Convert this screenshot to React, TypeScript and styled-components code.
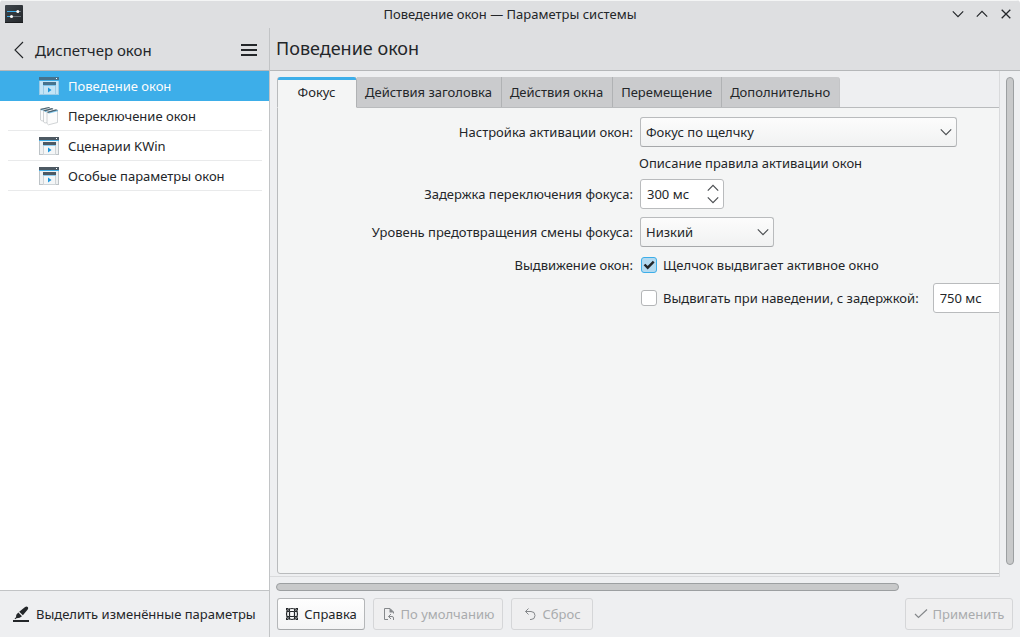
import React from "react";
import styled, { createGlobalStyle } from "styled-components";

const GlobalStyle = createGlobalStyle`
  *, *::before, *::after { box-sizing: border-box; }
  html, body { margin: 0; padding: 0; background: #fff; }
  body, button, input, select {
    font-family: "Noto Sans", sans-serif;
    font-size: 13px;
    line-height: 18px;
    color: #232629;
  }
`;

const Window = styled.div`
  display: flex;
  flex-direction: column;
  height: 100vh;
  overflow: hidden;
  background: #eeeff1;
  border-radius: 4px 4px 0 0;
`;

const TitleBar = styled.header`
  flex: none;
  display: grid;
  grid-template-columns: 1fr auto 1fr;
  align-items: center;
  height: 28px;
  padding: 0 2px 2px;
  background: #dedfe1;
  border-top: 1px solid #f4f5f5;

  > svg { margin-left: 3px; }
`;

const WindowButtons = styled.div`
  justify-self: end;
  display: flex;
`;

const IconButton = styled.button<{ $size: number }>`
  display: flex;
  align-items: center;
  justify-content: center;
  width: ${(p) => p.$size}px;
  height: ${(p) => p.$size}px;
  padding: 0;
  border: 0;
  background: none;
`;

const Body = styled.div`
  flex: 1;
  display: flex;
  min-height: 0;
`;

const Sidebar = styled.nav`
  flex: none;
  display: flex;
  flex-direction: column;
  width: 270px;
  background: #fff;
  border-right: 1px solid #c2c4c6;
`;

const PaneHeader = styled.div`
  flex: none;
  display: flex;
  align-items: center;
  height: 43px;
  padding: 0 8px 2px 6px;
  background: #dedfe1;
  border-bottom: 1px solid #b5b7b9;
`;

const SidebarHeader = styled(PaneHeader)`
  padding: 2px 8px 0 7px;
`;

const SidebarTitle = styled.h2`
  flex: 1;
  margin: 0 0 0 4px;
  font-size: 15px;
  line-height: 20px;
  font-weight: 400;
`;

const PageTitle = styled.h1`
  margin: 0;
  font-size: 18px;
  line-height: 24px;
  font-weight: 400;
`;

const NavList = styled.ul`
  flex: 1;
  margin: 0;
  padding: 0;
  list-style: none;
`;

const NavItem = styled.li<{ $active?: boolean }>`
  padding: 0 7px 0 8px;
  background: ${(p) => (p.$active ? "#3daee9" : "transparent")};
`;

const NavLink = styled.a<{ $active?: boolean }>`
  display: flex;
  align-items: center;
  gap: 8px;
  height: 30px;
  padding-left: 30px;
  color: ${(p) => (p.$active ? "#fcfcfc" : "#232629")};
  text-decoration: none;
  border-bottom: 1px solid ${(p) => (p.$active ? "transparent" : "#e9eaeb")};
`;

const HighlightButton = styled.button`
  flex: none;
  display: flex;
  align-items: center;
  gap: 6px;
  height: 47px;
  padding: 0 12px;
  border: 0;
  border-top: 1px solid #c2c4c6;
  background: #eeeff1;
  white-space: nowrap;
`;

const Main = styled.main`
  flex: 1;
  display: flex;
  flex-direction: column;
  min-width: 0;
`;

const ScrollArea = styled.div`
  flex: 1;
  display: grid;
  grid-template-columns: minmax(0, 1fr) 20px;
  grid-template-rows: minmax(0, 1fr) 20px;
  min-height: 0;
`;

const Viewport = styled.div`
  overflow: hidden;
  padding: 6px 0 2px 7px;
  border-right: 1px solid #d9dadc;
  border-bottom: 1px solid #d9dadc;
`;

const Page = styled.div`
  display: flex;
  flex-direction: column;
  width: 135%;
  height: 100%;
`;

const Tabs = styled.div`
  flex: none;
  display: flex;
  height: 31px;
  margin-bottom: -1px;
`;

const Tab = styled.button<{ $active?: boolean }>`
  min-width: 80px;
  padding: 0 9px 0 8px;
  border: 0;
  background: #cacbcd;
  border-right: 1px solid #b0b2b4;
  border-bottom: 1px solid #b9bbbd;
  white-space: nowrap;

  &:last-child {
    border-right-color: #c4c5c7;
    border-top-right-radius: 3px;
  }

  ${(p) =>
    p.$active &&
    `
    position: relative;
    background: linear-gradient(#3daee9 3px, #f4f5f5 3px);
    border-left: 1px solid #b9bbbd;
    border-bottom-color: #f4f5f5;
    border-radius: 3px 3px 0 0;
  `}
`;

const TabPane = styled.div`
  flex: 1;
  padding: 9px 8px;
  background: #f4f5f5;
  border: 1px solid #b9bbbd;
  border-radius: 0 0 3px 3px;
`;

const Form = styled.form`
  display: grid;
  grid-template-columns: 347px max-content;
  column-gap: 7px;
  row-gap: 8px;
  align-items: center;
`;

const FieldLabel = styled.label`
  justify-self: end;
  white-space: nowrap;
`;

const FieldCell = styled.div<{ $height: number }>`
  grid-column: 2;
  display: flex;
  align-items: center;
  height: ${(p) => p.$height}px;
  white-space: nowrap;
`;

const SelectBox = styled.div<{ $width: number }>`
  position: relative;
  width: ${(p) => p.$width}px;

  svg {
    position: absolute;
    right: 5px;
    top: 11px;
    pointer-events: none;
  }
`;

const Select = styled.select`
  appearance: none;
  width: 100%;
  height: 30px;
  padding: 0 24px 0 5px;
  border: 1px solid #b9bbbd;
  border-bottom-color: #a6a8aa;
  border-radius: 3px;
  background: linear-gradient(#fcfcfc, #f1f2f2);
`;

const Description = styled.span`
  margin-left: -1px;
`;

const Spin = styled.div`
  display: flex;
  align-items: center;
  width: 84px;
  height: 30px;
  border: 1px solid #b9bbbd;
  border-radius: 3px;
  background: #fff;
`;

const SpinInput = styled.input`
  flex: 1;
  min-width: 0;
  height: 28px;
  padding: 0 0 0 6px;
  border: 0;
  background: none;
`;

const SpinButtons = styled.div`
  display: flex;
  flex-direction: column;
  width: 20px;
`;

const SpinButton = styled.button`
  display: flex;
  align-items: center;
  justify-content: center;
  height: 12px;
  padding: 0;
  border: 0;
  background: none;
`;

const CheckLabel = styled.label`
  display: flex;
  align-items: center;
  gap: 6px;
  margin-right: 14px;
`;

const CheckBox = styled.span`
  position: relative;
  display: flex;
  width: 16px;
  height: 16px;
  margin-left: 1px;

  svg {
    position: absolute;
    inset: 0;
    pointer-events: none;
  }
`;

const CheckInput = styled.input`
  appearance: none;
  width: 16px;
  height: 16px;
  margin: 0;
  border: 1px solid #b3b5b7;
  border-radius: 3px;
  background: #fff;

  &:checked {
    border-color: #3daee9;
    background: #b4daf0;
  }
  & + svg { display: none; }
  &:checked + svg { display: block; }
`;

const VTrack = styled.div`
  display: flex;
  justify-content: center;
  padding: 6px 0 12px;
`;

const HTrack = styled.div`
  display: flex;
  align-items: center;
  padding: 0 0 0 6px;
`;

const VThumb = styled.div`
  width: 8px;
  height: 100%;
  border: 1px solid #9c9fa1;
  border-radius: 4px;
  background: #c8c9ca;
`;

const HThumb = styled.div`
  width: 86%;
  height: 8px;
  border: 1px solid #9c9fa1;
  border-radius: 4px;
  background: #c8c9ca;
`;

const Actions = styled.footer`
  flex: none;
  display: flex;
  gap: 8px;
  padding: 1px 7px 7px;
`;

const Spacer = styled.div`
  flex: 1;
`;

const ActionButton = styled.button<{ $width: number }>`
  display: flex;
  align-items: center;
  justify-content: center;
  gap: 5px;
  width: ${(p) => p.$width}px;
  height: 32px;
  padding: 0;
  border: 1px solid #b5b7b9;
  border-bottom-color: #a6a8aa;
  border-radius: 3px;
  background: linear-gradient(#fefefe, #f4f4f5);
  white-space: nowrap;

  &:disabled {
    color: #a9abad;
    border-color: #d5d6d8;
    background: #efeff0;
  }
`;

const Chevron = ({ d, color = "#232629" }: { d: "up" | "down"; color?: string }) => (
  <svg width="12" height="8" viewBox="0 0 12 8" fill="none" stroke={color} strokeWidth="1.2">
    <path d={d === "up" ? "M.8 6.6 6 1.4l5.2 5.2" : "M.8 1.4 6 6.6l5.2-5.2"} />
  </svg>
);

const AppIcon = () => (
  <svg width="18" height="18" viewBox="0 0 18 18">
    <defs>
      <linearGradient id="appbg" x1="0" y1="0" x2="1" y2="1">
        <stop offset="0" stopColor="#3f464d" />
        <stop offset="1" stopColor="#24272a" />
      </linearGradient>
    </defs>
    <rect width="18" height="18" rx="1" fill="url(#appbg)" />
    <rect y="17" width="18" height="1" fill="#1a1c1e" />
    <path d="M2 6.5h11M2 11.5h4" stroke="#3daee9" />
    <path d="M13 6.5h3M7 11.5h9" stroke="#69727a" />
    <circle cx="12.8" cy="6.5" r="1.5" fill="#fcfcfc" />
    <circle cx="6.5" cy="11.5" r="1.5" fill="#fcfcfc" />
  </svg>
);

const WindowIcon = ({ active }: { active?: boolean }) => (
  <svg width="22" height="22" viewBox="0 0 22 22">
    <rect x="1" y="4" width="20" height="16" fill={active ? "#9ccbe6" : "#bdc3c7"} />
    <rect x="2" y="5" width="18" height="14" fill={active ? "#c3e4f6" : "#eff1f2"} />
    <rect x="1" y="2" width="20" height="3" fill={active ? "#46728c" : "#4d5963"} />
    <rect x="1" y="5" width="20" height="1" fill="#3daee9" />
    <rect x="18" y="3" width="1" height="1" fill="#fff" />
    <rect x="5" y="9" width="13" height="11" fill={active ? "#9ccbe6" : "#cfd4d7"} />
    <rect x="6" y="10" width="11" height="9" fill={active ? "#c3e4f6" : "#f4f6f7"} />
    <rect x="5" y="7" width="13" height="3" fill={active ? "#46728c" : "#4d5963"} />
    <rect x="5" y="10" width="13" height="1" fill={active ? "#7cc5ee" : "#8fcdf0"} />
    <path d="m10 12.500 3.500 2.500-3.500 2.500z" fill="#1e97dc" />
  </svg>
);

const SwitcherIcon = () => (
  <svg width="22" height="22" viewBox="0 0 22 22">
    <g stroke="#c5c9cc" strokeWidth=".8" fill="#fcfcfc">
      <path d="m2.500 4 9-1.500v12l-7.500 1.500-1.500-1z" />
      <path d="m5.500 5 9-1.500v13l-7.500 1.500-1.500-1z" />
      <path d="m9 7 10.500-1.800v12.300l-9 2.300L9 18.500z" />
    </g>
    <path d="m2 4 9-2 1 .8L3.500 5zM5 5.500 14 3l1.500 1L7 6.500zM8.500 7 18 4.300l2 1L10.500 8z" fill="#4d6472" />
    <path d="m3.500 5.200 2-.5M7 6.700l2-.5M10.500 8.200 20 5.700" stroke="#3daee9" strokeWidth=".6" />
  </svg>
);

const PenIcon = () => (
  <svg width="18" height="18" viewBox="0 0 18 18" fill="#232629">
    <path d="M1 15h16v2H1z" />
    <path d="m7.200 6.800 5.600-4.600c1.200-1 2.200-.9 2.900-.2s.7 1.700-.2 2.800l-4.600 5.500z" />
    <path d="M6.300 7.600 10 11.300l-2.300 1.500-3.200.4-1.300 1-.6-.6 1.400-1.400.3-2.500z" />
  </svg>
);

const HelpIcon = () => (
  <svg width="14" height="14" viewBox="0 0 14 14" fill="none" stroke="#232629">
    <circle cx="7" cy="7" r="5.500" strokeWidth="1.200" />
    <rect x="4.500" y="4.500" width="5" height="5" rx="1" strokeWidth="1.200" />
    <path d="M4.500 1.500v3h-3M9.500 1.500v3h3M4.500 12.500v-3h-3M9.500 12.500v-3h3" />
    <path d="M1 1h3L1 4zM13 1h-3l3 3zM1 13h3l-3-3zM13 13h-3l3-3z" fill="#232629" stroke="none" />
  </svg>
);

const DefaultsIcon = () => (
  <svg width="14" height="14" viewBox="0 0 14 14" fill="none" stroke="#85888b">
    <path d="M6 12.500H2.500v-11H8l3.500 3.500v1.500" />
    <path d="M7.500 1v4.500H12z" fill="#85888b" stroke="none" />
    <path d="M11.500 13v-2q0-1.500-1.500-1.500H6.500M9 7 6.500 9.500 9 12" />
  </svg>
);

const UndoIcon = () => (
  <svg width="14" height="14" viewBox="0 0 14 14" fill="none" stroke="#85888b">
    <path d="M5.500 1.500 2.500 4.500l3 3M2.500 4.500H8a4 4 0 0 1 0 8H7" />
  </svg>
);

const ApplyIcon = () => (
  <svg width="14" height="14" viewBox="0 0 14 14" fill="none" stroke="#85888b" strokeWidth="1.200">
    <path d="m1 7 3.500 3.500L13 2.500" />
  </svg>
);

const NAV = [
  { title: "Поведение окон", icon: <WindowIcon active />, active: true },
  { title: "Переключение окон", icon: <SwitcherIcon /> },
  { title: "Сценарии KWin", icon: <WindowIcon /> },
  { title: "Особые параметры окон", icon: <WindowIcon /> },
];

const TABS = ["Фокус", "Действия заголовка", "Действия окна", "Перемещение", "Дополнительно"];

const SpinBox = ({ id, value, label }: { id: string; value: string; label?: string }) => (
  <Spin>
    <SpinInput id={id} type="text" defaultValue={value} aria-label={label} />
    <SpinButtons>
      <SpinButton type="button" aria-label="Увеличить"><Chevron d="up" color="#4b4e51" /></SpinButton>
      <SpinButton type="button" aria-label="Уменьшить"><Chevron d="down" color="#4b4e51" /></SpinButton>
    </SpinButtons>
  </Spin>
);

export default function App() {
  return (
    <>
      <GlobalStyle />
      <Window>
        <TitleBar>
          <AppIcon />
          <span>Поведение окон — Параметры системы</span>
          <WindowButtons>
            <IconButton $size={24} aria-label="Свернуть"><Chevron d="down" /></IconButton>
            <IconButton $size={24} aria-label="Развернуть"><Chevron d="up" /></IconButton>
            <IconButton $size={24} aria-label="Закрыть">
              <svg width="10" height="10" viewBox="0 0 10 10" stroke="#232629" strokeWidth="1.300">
                <path d="m.7.7 8.600 8.600M9.300.7.7 9.300" />
              </svg>
            </IconButton>
          </WindowButtons>
        </TitleBar>
        <Body>
          <Sidebar>
            <SidebarHeader>
              <IconButton $size={24} aria-label="Назад">
                <svg width="10" height="18" viewBox="0 0 10 18" fill="none" stroke="#232629" strokeWidth="1.100">
                  <path d="M9 1 1 9l8 8" />
                </svg>
              </IconButton>
              <SidebarTitle>Диспетчер окон</SidebarTitle>
              <IconButton $size={24} aria-label="Меню">
                <svg width="16" height="12" viewBox="0 0 16 12" fill="#232629">
                  <path d="M0 0h16v2H0zM0 5h16v2H0zM0 10h16v2H0z" />
                </svg>
              </IconButton>
            </SidebarHeader>
            <NavList>
              {NAV.map((item) => (
                <NavItem key={item.title} $active={item.active}>
                  <NavLink href="#" $active={item.active}>
                    {item.icon}
                    {item.title}
                  </NavLink>
                </NavItem>
              ))}
            </NavList>
            <HighlightButton type="button">
              <PenIcon />
              Выделить изменённые параметры
            </HighlightButton>
          </Sidebar>
          <Main>
            <PaneHeader>
              <PageTitle>Поведение окон</PageTitle>
            </PaneHeader>
            <ScrollArea>
              <Viewport>
                <Page>
                  <Tabs role="tablist">
                    {TABS.map((t, i) => (
                      <Tab key={t} type="button" role="tab" aria-selected={i === 0} $active={i === 0}>
                        {t}
                      </Tab>
                    ))}
                  </Tabs>
                  <TabPane role="tabpanel">
                    <Form>
                      <FieldLabel htmlFor="policy">Настройка активации окон:</FieldLabel>
                      <FieldCell $height={30}>
                        <SelectBox $width={317}>
                          <Select id="policy"><option>Фокус по щелчку</option></Select>
                          <Chevron d="down" color="#4b4e51" />
                        </SelectBox>
                      </FieldCell>
                      <FieldCell $height={16}>
                        <Description>Описание правила активации окон</Description>
                      </FieldCell>
                      <FieldLabel htmlFor="delay">Задержка переключения фокуса:</FieldLabel>
                      <FieldCell $height={30}>
                        <SpinBox id="delay" value="300 мс" />
                      </FieldCell>
                      <FieldLabel htmlFor="level">Уровень предотвращения смены фокуса:</FieldLabel>
                      <FieldCell $height={30}>
                        <SelectBox $width={134}>
                          <Select id="level"><option>Низкий</option></Select>
                          <Chevron d="down" color="#4b4e51" />
                        </SelectBox>
                      </FieldCell>
                      <FieldLabel htmlFor="raise">Выдвижение окон:</FieldLabel>
                      <FieldCell $height={20}>
                        <CheckLabel>
                          <CheckBox>
                            <CheckInput id="raise" type="checkbox" defaultChecked />
                            <svg width="16" height="16" viewBox="0 0 16 16" fill="none" stroke="#232629" strokeWidth="2.400">
                              <path d="m3.500 7.500 3.200 3.200L12.700 4.700" />
                            </svg>
                          </CheckBox>
                          Щелчок выдвигает активное окно
                        </CheckLabel>
                      </FieldCell>
                      <FieldCell $height={30}>
                        <CheckLabel>
                          <CheckBox><CheckInput type="checkbox" /></CheckBox>
                          Выдвигать при наведении, с задержкой:
                        </CheckLabel>
                        <SpinBox id="hover" value="750 мс" label="Задержка при наведении" />
                      </FieldCell>
                    </Form>
                  </TabPane>
                </Page>
              </Viewport>
              <VTrack><VThumb /></VTrack>
              <HTrack><HThumb /></HTrack>
            </ScrollArea>
            <Actions>
              <ActionButton type="button" $width={88}><HelpIcon />Справка</ActionButton>
              <ActionButton type="button" $width={130} disabled><DefaultsIcon />По умолчанию</ActionButton>
              <ActionButton type="button" $width={82} disabled><UndoIcon />Сброс</ActionButton>
              <Spacer />
              <ActionButton type="button" $width={108} disabled><ApplyIcon />Применить</ActionButton>
            </Actions>
          </Main>
        </Body>
      </Window>
    </>
  );
}
